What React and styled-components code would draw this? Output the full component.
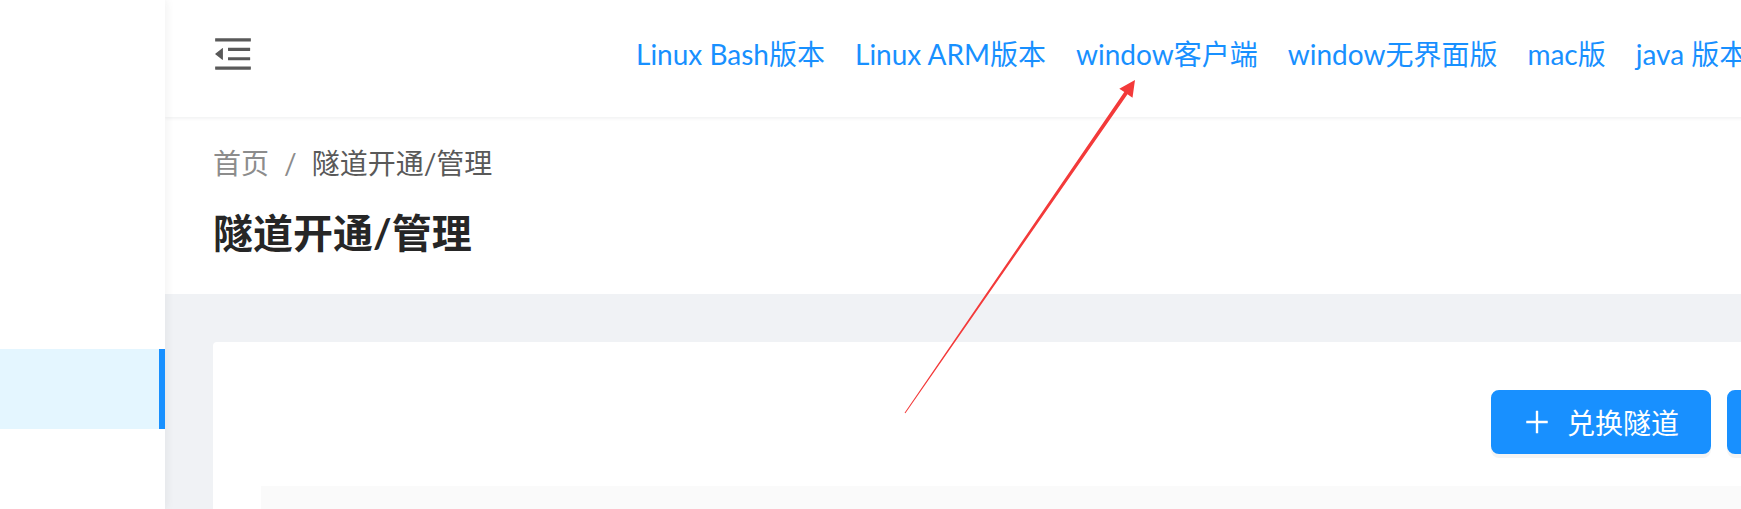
import React from "react";
import styled, { createGlobalStyle } from "styled-components";

const GlobalStyle = createGlobalStyle`
  html, body {
    margin: 0;
    padding: 0;
    overflow: hidden;
    background: #fff;
  }
  body {
    font-family: Lato, "Noto Sans CJK SC", sans-serif;
  }
`;

const Layout = styled.div`
  display: flex;
  width: 2043px;
  height: 100vh;
  overflow: hidden;
`;

const Sidebar = styled.aside`
  width: 165px;
  flex-shrink: 0;
  background: #fff;
  box-shadow: 2px 0 8px rgba(29, 35, 41, 0.06);
  position: relative;
  z-index: 2;
`;

const Logo = styled.div`
  height: 117px;
`;

const Menu = styled.ul`
  list-style: none;
  margin: 0;
  padding: 232px 0 0;
`;

const MenuItem = styled.li`
  height: 80px;
  background: ${(p) => (p.active ? "#e4f6ff" : "transparent")};
  border-right: 6px solid ${(p) => (p.active ? "#1890ff" : "transparent")};
`;

const Main = styled.div`
  flex: 1;
  display: flex;
  flex-direction: column;
  background: #f0f2f5;
  min-width: 0;
  & > * {
    flex-shrink: 0;
  }
`;

const Header = styled.header`
  height: 117px;
  box-sizing: border-box;
  padding: 0 0 9px 48px;
  display: flex;
  align-items: center;
  background: #fff;
  box-shadow: 0 1px 4px rgba(0, 21, 41, 0.08);
  position: relative;
  z-index: 1;
  overflow: hidden;
`;

const Trigger = styled.span`
  display: inline-flex;
  width: 40px;
  height: 40px;
  color: #595959;
  flex-shrink: 0;
`;

const Nav = styled.nav`
  display: flex;
  margin-left: 368px;
  flex-shrink: 0;
`;

const NavLink = styled.a`
  padding: 0 15px;
  font-size: 28px;
  line-height: 44px;
  color: #1890ff;
  white-space: nowrap;
  text-decoration: none;
`;

const PageHeader = styled.div`
  background: #fff;
  padding: 24px 48px 33px;
`;

const Breadcrumb = styled.div`
  display: flex;
  font-size: 28px;
  line-height: 44px;
  color: #8c8c8c;
`;

const Crumb = styled.span`
  color: ${(p) => (p.current ? "#595959" : "#8c8c8c")};
`;

const Separator = styled.span`
  margin: 0 15px;
`;

const Title = styled.h1`
  margin: 20px 0 0;
  font-size: 40px;
  line-height: 56px;
  font-weight: 700;
  color: #262626;
`;

const Content = styled.div`
  padding: 48px;
`;

const Card = styled.div`
  background: #fff;
  border-radius: 4px;
  padding: 48px;
`;

const Toolbar = styled.div`
  display: flex;
  justify-content: flex-end;
  gap: 16px;
  margin-bottom: 32px;
`;

const Button = styled.button`
  display: inline-flex;
  align-items: center;
  height: 64px;
  padding: 0 30px;
  border: 2px solid #1890ff;
  border-radius: 8px;
  background: #1890ff;
  color: #fff;
  font-family: inherit;
  font-size: 28px;
  box-shadow: 0 4px 0 rgba(0, 0, 0, 0.045);
  cursor: pointer;
  white-space: nowrap;
`;

const ButtonIcon = styled.svg`
  width: 28px;
  height: 28px;
  margin-right: 16px;
  fill: currentColor;
`;

const TableHead = styled.div`
  height: 100px;
  background: #fafafa;
  border-bottom: 2px solid #f0f0f0;
`;

const Annotation = styled.svg`
  position: fixed;
  left: 0;
  top: 0;
  width: 1741px;
  height: 509px;
  pointer-events: none;
  z-index: 10;
`;

const MenuFoldIcon = () => (
  <svg viewBox="64 64 896 896" width="40" height="40" fill="currentColor">
    <path d="M408 442h480c4.4 0 8-3.6 8-8v-56c0-4.4-3.6-8-8-8H408c-4.4 0-8 3.6-8 8v56c0 4.4 3.6 8 8 8zm-8 204c0 4.4 3.6 8 8 8h480c4.4 0 8-3.6 8-8v-56c0-4.4-3.6-8-8-8H408c-4.4 0-8 3.6-8 8v56zm504-486H120c-4.4 0-8 3.6-8 8v56c0 4.4 3.6 8 8 8h784c4.4 0 8-3.6 8-8v-56c0-4.4-3.6-8-8-8zm0 632H120c-4.4 0-8 3.6-8 8v56c0 4.4 3.6 8 8 8h784c4.4 0 8-3.6 8-8v-56c0-4.4-3.6-8-8-8zM115.4 518.9L271.7 642c5.8 4.6 14.4.5 14.4-6.9V388.9c0-7.4-8.5-11.5-14.4-6.9L115.4 505.1a8.74 8.74 0 000 13.8z" />
  </svg>
);

const PlusIcon = () => (
  <ButtonIcon viewBox="64 64 896 896">
    <path d="M482 152h60q8 0 8 8v704q0 8-8 8h-60q-8 0-8-8V160q0-8 8-8z" />
    <path d="M176 474h672q8 0 8 8v60q0 8-8 8H176q-8 0-8-8v-60q0-8 8-8z" />
  </ButtonIcon>
);

const links = [
  "Linux Bash版本",
  "Linux ARM版本",
  "window客户端",
  "window无界面版",
  "mac版",
  "java 版本",
  "Docker版本",
];

export default function App() {
  return (
    <>
      <GlobalStyle />
      <Layout>
        <Sidebar>
          <Logo />
          <Menu>
            <MenuItem active />
          </Menu>
        </Sidebar>
        <Main>
          <Header>
            <Trigger>
              <MenuFoldIcon />
            </Trigger>
            <Nav>
              {links.map((l) => (
                <NavLink key={l} href="#">
                  {l}
                </NavLink>
              ))}
            </Nav>
          </Header>
          <PageHeader>
            <Breadcrumb>
              <Crumb>首页</Crumb>
              <Separator>/</Separator>
              <Crumb current>隧道开通/管理</Crumb>
            </Breadcrumb>
            <Title>隧道开通/管理</Title>
          </PageHeader>
          <Content>
            <Card>
              <Toolbar>
                <Button>
                  <PlusIcon />
                  兑换隧道
                </Button>
                <Button>
                  <PlusIcon />
                  开通隧道
                </Button>
              </Toolbar>
              <TableHead />
            </Card>
          </Content>
        </Main>
      </Layout>
      <Annotation viewBox="0 0 1741 509">
        <polygon
          fill="#f33a3a"
          points="905.4,413.3 1127.5,94.3 1132.5,97.7 1135,80 1119.3,88.7 1124.3,92.1 904.6,412.7"
        />
      </Annotation>
    </>
  );
}
